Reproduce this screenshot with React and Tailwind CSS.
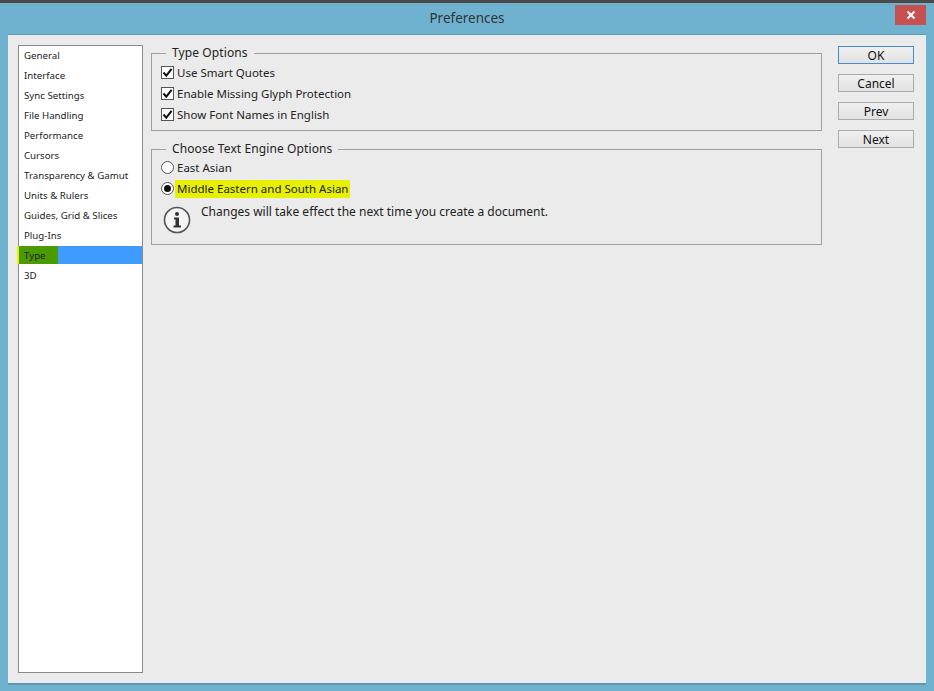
const categories = ["General", "Interface", "Sync Settings", "File Handling", "Performance", "Cursors", "Transparency & Gamut", "Units & Rulers", "Guides, Grid & Slices", "Plug-Ins", "Type", "3D"];

function CheckRow({ label }) {
  return (
    <div className="flex items-center h-[21px]">
      <span className="w-[13px] h-[13px] mr-[3px] border border-[#555] bg-white flex items-center justify-center">
        <svg width="11" height="11" viewBox="0 0 11 11">
          <path d="M1.5 5.5 L4.3 8.6 L9.6 1.8" fill="none" stroke="#111" strokeWidth="2" />
        </svg>
      </span>
      <span>{label}</span>
    </div>
  );
}

function RadioRow({ label, checked }) {
  return (
    <div className="flex items-center h-[21px]">
      <span className="w-[13px] h-[13px] mr-[3px] rounded-full border border-[#555] bg-white flex items-center justify-center">
        {checked && <span className="w-[7px] h-[7px] rounded-full bg-[#111]" />}
      </span>
      {checked ? (
        <span className="bg-[#e6f000] -ml-[2px] pl-[2px] pr-[2px] h-[18px] leading-[18px]">{label}</span>
      ) : (
        <span>{label}</span>
      )}
    </div>
  );
}

function Group({ title, className, children }) {
  return (
    <fieldset className={"border border-[#a0a0a0] pl-[9px] ml-0 " + className}>
      <legend className="ml-[5px] px-[6px] h-[16px] leading-[15px] text-[12px] tracking-[0.1px] text-[#222]">{title}</legend>
      {children}
    </fieldset>
  );
}

function SideButton({ label, primary }) {
  return (
    <button className={"w-[76px] h-[18px] border bg-gradient-to-b from-[#f0f0f0] to-[#e2e2e2] text-[12px] leading-[16px] pt-[1px] text-[#111] " + (primary ? "border-[#3f8fd2]" : "border-[#ababab]")}>
      {label}
    </button>
  );
}

export default function App() {
  return (
    <div className="w-[934px] h-[691px] flex flex-col bg-[#6fb2cf] text-[#222] text-[11.5px] overflow-hidden" style={{ fontFamily: '"Noto Sans", Tahoma, sans-serif' }}>
      <div className="h-[3px] bg-[#4a4a4a] shrink-0" />
      <div className="h-[31px] shrink-0 relative flex items-center justify-center text-[13.5px] text-[#333]">
        Preferences
        <div className="absolute left-[895px] top-[2px] w-[31px] h-[20px] bg-[#c75050] flex items-center justify-center">
          <svg width="10" height="10" viewBox="0 0 10 10">
            <path d="M1.5 1.5 L8.5 8.5 M8.5 1.5 L1.5 8.5" stroke="#fff" strokeWidth="2" />
          </svg>
        </div>
      </div>

      <div className="flex-1 ml-[8px] mr-[8px] mb-[6px] bg-[#ebebeb] border-t border-[#5f97b0] border-b-2 border-b-[#5f97b0] flex pl-[10px] pt-[10px] pb-[10px]">
        <div className="w-[125px] border border-[#8a8a8a] bg-white text-[9.7px] text-[#222] flex flex-col">
          {categories.map((c) => (
            <div key={c} className="h-[20px] whitespace-nowrap">
              <div className={"relative h-[18px] leading-[20px] pl-[5px] " + (c === "Type" ? "bg-[#3f9bff]" : "")}>
                {c === "Type" && <span className="absolute -left-[2px] top-0 w-[41px] h-[18px] bg-[#4b9a00] border-l-2 border-[#e6f000]" />}
                <span className="relative">{c}</span>
              </div>
            </div>
          ))}
        </div>

        <div className="w-[671px] ml-[8px] flex flex-col gap-[10px]">
          <Group title="Type Options" className="h-[86px] pt-[1px]">
            <CheckRow label="Use Smart Quotes" />
            <CheckRow label="Enable Missing Glyph Protection" />
            <CheckRow label="Show Font Names in English" />
          </Group>
          <Group title="Choose Text Engine Options" className="h-[104px]">
            <RadioRow label="East Asian" />
            <RadioRow label="Middle Eastern and South Asian" checked />
            <div className="flex mt-[5px]">
              <svg width="28" height="28" viewBox="0 0 28 28" className="shrink-0 ml-[2px] mt-[2px]">
                <circle cx="14" cy="14" r="12.5" fill="#f4f4f4" stroke="#555" strokeWidth="1.6" />
                <circle cx="14" cy="8" r="2" fill="#333" />
                <path d="M11 11.5 H16 V19.5 H18 V21.5 H10.5 V19.5 H12.5 V13.5 H11 Z" fill="#333" />
              </svg>
              <span className="ml-[10px] leading-[16px] text-[12px]">Changes will take effect the next time you create a document.</span>
            </div>
          </Group>
        </div>

        <div className="ml-[16px] pt-[1px] flex flex-col gap-[10px]">
          <SideButton label="OK" primary />
          <SideButton label="Cancel" />
          <SideButton label="Prev" />
          <SideButton label="Next" />
        </div>
      </div>
    </div>
  );
}
